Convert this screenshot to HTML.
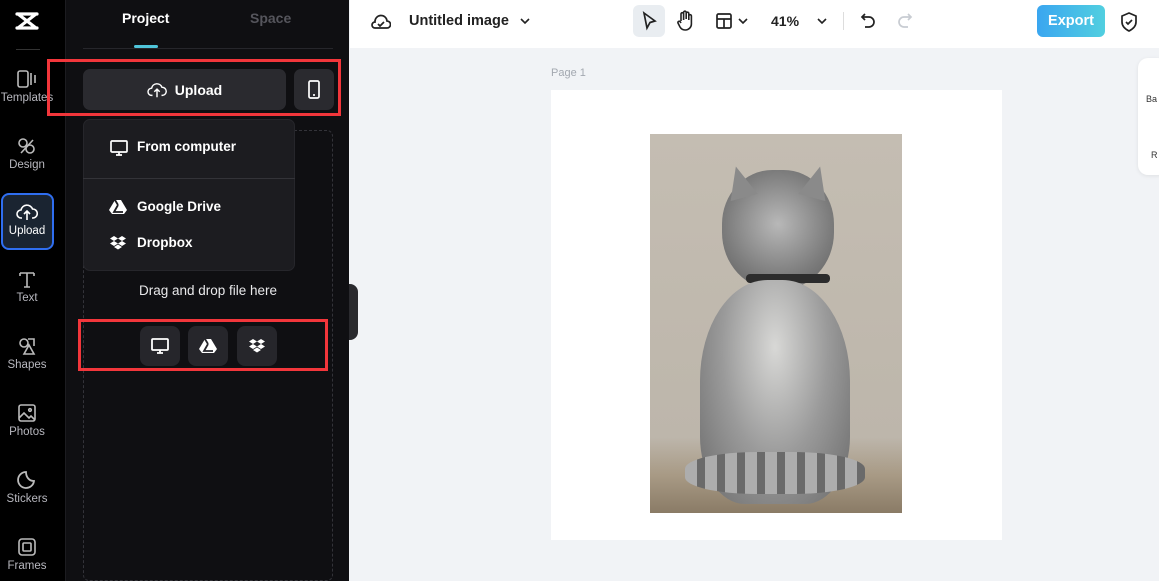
<!DOCTYPE html>
<html><head><meta charset="utf-8"><style>
*{margin:0;padding:0;box-sizing:border-box}
body{width:1159px;height:581px;overflow:hidden;font-family:"Liberation Sans",sans-serif;background:#f1f3f6;position:relative}
.side{position:absolute;left:0;top:0;width:65px;height:581px;background:#000}
.panel{position:absolute;left:65px;top:0;width:284px;height:581px;background:#0f0f12;border-left:1px solid #1c1c20}
.nav{position:absolute;left:0;width:54px;text-align:center;color:#b8b8bf;font-size:11.5px}
.nav svg{display:block;margin:0 auto 3px}
.abs{position:absolute}
.top{position:absolute;left:350px;top:0;width:809px;height:48px;background:#fff}
</style></head><body>
<div class="side">
  <svg class="abs" style="left:14px;top:10px" width="26" height="22" viewBox="0 0 26 22"><path d="M3 4h20M3 18h20M4 4l18 14M22 4L4 18" stroke="#fff" stroke-width="3.2" fill="none" stroke-linecap="round"/></svg>
  <div class="abs" style="left:16px;top:49px;width:24px;height:1px;background:#333"></div>
  <div class="nav" style="top:69px"><svg width="22" height="20" viewBox="0 0 22 20" fill="none" stroke="#bbb" stroke-width="1.6"><rect x="2" y="2" width="10" height="16" rx="2"/><path d="M15 4v12M19 6v8"/></svg>Templates</div>
  <div class="nav" style="top:136px"><svg width="22" height="20" viewBox="0 0 22 20" fill="none" stroke="#bbb" stroke-width="1.6"><circle cx="7" cy="7" r="4"/><circle cx="14" cy="13" r="4"/><path d="M5 17L17 4"/></svg>Design</div>
  <div class="abs" style="left:1px;top:193px;width:53px;height:57px;border:2px solid #2f6ef0;border-radius:8px;background:#1a2431"></div>
  <div class="nav" style="top:202px;color:#fff"><svg width="22" height="20" viewBox="0 0 22 20" fill="none" stroke="#fff" stroke-width="1.6"><path d="M6 16H5a4 4 0 010-8 6 6 0 0111.5-1A4.5 4.5 0 0117 16h-1"/><path d="M11 18v-8M8 12l3-3 3 3"/></svg>Upload</div>
  <div class="nav" style="top:269px"><svg width="22" height="20" viewBox="0 0 22 20" fill="none" stroke="#bbb" stroke-width="1.6"><path d="M4 4h14M11 4v14M4 4v3M18 4v3M8 18h6"/></svg>Text</div>
  <div class="nav" style="top:336px"><svg width="22" height="20" viewBox="0 0 22 20" fill="none" stroke="#bbb" stroke-width="1.6"><circle cx="8" cy="7" r="4"/><path d="M12 3h6v7M13 9l5 9H8z"/></svg>Shapes</div>
  <div class="nav" style="top:403px"><svg width="22" height="20" viewBox="0 0 22 20" fill="none" stroke="#bbb" stroke-width="1.6"><rect x="3" y="2" width="16" height="16" rx="2"/><path d="M3 15l5-5 5 5 2-2 4 4"/><circle cx="14" cy="7" r="1.3"/></svg>Photos</div>
  <div class="nav" style="top:470px"><svg width="22" height="20" viewBox="0 0 22 20" fill="none" stroke="#bbb" stroke-width="1.8"><path d="M18 11A8 8 0 1110 2c0 5 3 9 8 9z"/></svg>Stickers</div>
  <div class="nav" style="top:537px"><svg width="22" height="20" viewBox="0 0 22 20" fill="none" stroke="#bbb" stroke-width="1.6"><rect x="3" y="2" width="16" height="16" rx="3"/><rect x="7" y="6" width="8" height="8" rx="1"/></svg>Frames</div>
</div>
<div class="panel">
  <div class="abs" style="left:56px;top:10px;color:#fff;font-weight:bold;font-size:14px">Project</div>
  <div class="abs" style="left:184px;top:10px;color:#55555c;font-weight:bold;font-size:14px">Space</div>
  <div class="abs" style="left:68px;top:45px;width:24px;height:3px;background:#4fc4d9;border-radius:2px"></div>
  <div class="abs" style="left:17px;top:48px;width:250px;height:1px;background:#26262b"></div>
  <div class="abs" style="left:17px;top:69px;width:203px;height:41px;background:#2a2a2f;border-radius:7px;color:#fff;font-size:14px;font-weight:bold;display:flex;align-items:center;justify-content:center;gap:8px"><svg width="20" height="18" viewBox="0 0 22 20" fill="none" stroke="#fff" stroke-width="1.6"><path d="M6 16H5a4 4 0 010-8 6 6 0 0111.5-1A4.5 4.5 0 0117 16h-1"/><path d="M11 18v-8M8 12l3-3 3 3"/></svg>Upload</div>
  <div class="abs" style="left:228px;top:69px;width:40px;height:41px;background:#2a2a2f;border-radius:7px"><svg class="abs" style="left:12px;top:11px" width="16" height="19" viewBox="0 0 16 19" fill="none" stroke="#fff" stroke-width="1.7"><rect x="3" y="1" width="10" height="17" rx="1.5"/><path d="M7 15h2"/></svg></div>
  <div class="abs" style="left:-19px;top:59px;width:294px;height:57px;border:3px solid #f2363b"></div>
  <div class="abs" style="left:17px;top:130px;width:250px;height:451px;border:1px dashed #333339;border-radius:6px"></div>
  <div class="abs" style="left:17px;top:119px;width:212px;height:152px;background:#1c1c20;border-radius:7px;border:1px solid #26262b"></div>
  <div class="abs" style="left:17px;top:178px;width:212px;height:1px;background:#333338"></div>
  <svg class="abs" style="left:43px;top:139px" width="20" height="18" viewBox="0 0 20 18" fill="none" stroke="#fff" stroke-width="1.7"><rect x="2" y="2" width="16" height="11" rx="1"/><path d="M7 16h6M10 13v3"/></svg>
  <div class="abs" style="left:71px;top:139px;color:#fff;font-size:13.5px;font-weight:bold">From computer</div>
  <svg class="abs" style="left:43px;top:199px" width="18" height="16" viewBox="0 0 18 16"><path d="M6 1h6l6 10-3 4H3L0 11z" fill="#fff"/><path d="M6 1l3 5M9 6L5 13h9" stroke="#1c1c20" stroke-width="1.8" fill="none"/></svg>
  <div class="abs" style="left:71px;top:199px;color:#fff;font-size:13.5px;font-weight:bold">Google Drive</div>
  <svg class="abs" style="left:43px;top:235px" width="18" height="16" viewBox="0 0 18 16" fill="#fff"><path d="M5 1l4 2.5L5 6 1 3.5zM13 1l4 2.5L13 6 9 3.5zM5 6l4 2.5L5 11 1 8.5zM13 6l4 2.5-4 2.5-4-2.5zM5 12l4-2.5 4 2.5-4 2.5z"/></svg>
  <div class="abs" style="left:71px;top:235px;color:#fff;font-size:13.5px;font-weight:bold">Dropbox</div>
  <div class="abs" style="left:17px;top:283px;width:250px;text-align:center;color:#e8e8ea;font-size:13.5px">Drag and drop file here</div>
  <div class="abs" style="left:74px;top:326px;width:40px;height:40px;background:#26262b;border-radius:8px"><svg class="abs" style="left:10px;top:11px" width="20" height="18" viewBox="0 0 20 18" fill="none" stroke="#fff" stroke-width="1.8"><rect x="2" y="2" width="16" height="11" rx="1"/><path d="M7 16h6M10 13v3"/></svg></div>
  <div class="abs" style="left:122px;top:326px;width:40px;height:40px;background:#26262b;border-radius:8px"><svg class="abs" style="left:11px;top:12px" width="18" height="16" viewBox="0 0 18 16"><path d="M6 1h6l6 10-3 4H3L0 11z" fill="#fff"/><path d="M6 1l3 5M9 6L5 13h9" stroke="#26262b" stroke-width="1.8" fill="none"/></svg></div>
  <div class="abs" style="left:171px;top:326px;width:40px;height:40px;background:#26262b;border-radius:8px"><svg class="abs" style="left:11px;top:12px" width="18" height="16" viewBox="0 0 18 16" fill="#fff"><path d="M5 1l4 2.5L5 6 1 3.5zM13 1l4 2.5L13 6 9 3.5zM5 6l4 2.5L5 11 1 8.5zM13 6l4 2.5-4 2.5-4-2.5zM5 12l4-2.5 4 2.5-4 2.5z"/></svg></div>
  <div class="abs" style="left:12px;top:319px;width:250px;height:52px;border:3px solid #f2363b"></div>
</div>
<div class="abs" style="left:349px;top:284px;width:9px;height:56px;background:#2a2a2e;border-radius:0 8px 8px 0"></div>
<div class="top">
  <svg class="abs" style="left:21px;top:12px" width="20" height="20" viewBox="0 0 20 20" fill="none" stroke="#222" stroke-width="1.7"><path d="M5 16H4a3 3 0 010-6 6 6 0 0112-1 3.5 3.5 0 010 7H5z"/><path d="M7 12l2 2 4-4"/></svg>
  <div class="abs" style="left:59px;top:13px;font-size:14.5px;font-weight:bold;color:#222">Untitled image</div>
  <svg class="abs" style="left:169px;top:16px" width="12" height="10" viewBox="0 0 12 10" fill="none" stroke="#222" stroke-width="1.6"><path d="M2 3l4 4 4-4"/></svg>
  <div class="abs" style="left:283px;top:5px;width:32px;height:32px;background:#e9edf1;border-radius:6px"></div>
  <svg class="abs" style="left:290px;top:11px" width="18" height="20" viewBox="0 0 18 20" fill="none" stroke="#222" stroke-width="1.7"><path d="M4 2l11 8-5 1.5L7 17z"/></svg>
  <svg class="abs" style="left:326px;top:10px" width="18" height="22" viewBox="0 0 18 22" fill="none" stroke="#222" stroke-width="1.6"><path d="M5 11V4a1.3 1.3 0 012.6 0v6M7.6 9V2.5a1.3 1.3 0 012.6 0V9M10.2 9V3.5a1.3 1.3 0 012.6 0V10M12.8 10V6a1.3 1.3 0 012.6 0v8a6 6 0 01-6 6H9a6 6 0 01-5-3l-2-4a1.3 1.3 0 012.2-1.3L5 13"/></svg>
  <svg class="abs" style="left:365px;top:12px" width="18" height="18" viewBox="0 0 18 18" fill="none" stroke="#222" stroke-width="1.7"><rect x="2" y="2" width="14" height="14" rx="1.5"/><path d="M2 7h14M9 7v9"/></svg>
  <svg class="abs" style="left:387px;top:16px" width="12" height="10" viewBox="0 0 12 10" fill="none" stroke="#222" stroke-width="1.6"><path d="M2 3l4 4 4-4"/></svg>
  <div class="abs" style="left:421px;top:13px;font-size:14px;font-weight:bold;color:#222">41%</div>
  <svg class="abs" style="left:466px;top:16px" width="12" height="10" viewBox="0 0 12 10" fill="none" stroke="#222" stroke-width="1.6"><path d="M2 3l4 4 4-4"/></svg>
  <div class="abs" style="left:493px;top:12px;width:1px;height:18px;background:#ddd"></div>
  <svg class="abs" style="left:509px;top:11px" width="18" height="20" viewBox="0 0 18 20" fill="none" stroke="#222" stroke-width="1.7"><path d="M6 3L3 6l3 3M3 6h7a5 5 0 010 10H6"/></svg>
  <svg class="abs" style="left:546px;top:11px" width="18" height="20" viewBox="0 0 18 20" fill="none" stroke="#c8ccd2" stroke-width="1.7"><path d="M12 3l3 3-3 3M15 6H8a5 5 0 000 10h4"/></svg>
  <div class="abs" style="left:687px;top:5px;width:68px;height:32px;border-radius:6px;background:linear-gradient(90deg,#3aa6f0,#51cfe0);color:#fff;font-weight:bold;font-size:14.5px;text-align:center;line-height:32px">Export</div>
  <svg class="abs" style="left:769px;top:11px" width="20" height="22" viewBox="0 0 20 22" fill="none" stroke="#222" stroke-width="1.7"><path d="M10 2l7 3v6c0 4-3 7-7 9-4-2-7-5-7-9V5z"/><path d="M7 11l2 2 4-4"/></svg>
</div>
<div class="abs" style="left:551px;top:67px;font-size:11px;color:#a3a8b0">Page 1</div>
<div class="abs" style="left:551px;top:90px;width:451px;height:450px;background:#fff"></div>
<div class="abs" style="left:650px;top:134px;width:252px;height:379px;background:linear-gradient(180deg,#c4bdb2 0%,#bdb6ab 80%,#a89a85 90%,#8a7b66 100%);overflow:hidden">
  <div class="abs" style="left:72px;top:36px;width:112px;height:120px;border-radius:45% 45% 48% 48%;background:radial-gradient(circle at 50% 45%,#b8b8b8,#7d7d7d 60%,#5a5a5a)"></div>
  <div class="abs" style="left:76px;top:32px;width:0;height:0;border-left:14px solid transparent;border-right:14px solid transparent;border-bottom:32px solid #8a8a8a;transform:rotate(-15deg)"></div>
  <div class="abs" style="left:152px;top:32px;width:0;height:0;border-left:14px solid transparent;border-right:14px solid transparent;border-bottom:32px solid #8a8a8a;transform:rotate(15deg)"></div>
  <div class="abs" style="left:96px;top:140px;width:84px;height:9px;border-radius:4px;background:#2c2c2c"></div>
  <div class="abs" style="left:50px;top:146px;width:150px;height:224px;border-radius:45% 45% 30% 30%;background:radial-gradient(ellipse at 50% 30%,#d8d8d6,#9a9a9a 50%,#6a6a6a)"></div>
  <div class="abs" style="left:35px;top:318px;width:180px;height:42px;border-radius:40%;background:repeating-linear-gradient(90deg,#adadad 0 12px,#6a6a6a 12px 20px)"></div>
</div>
<div class="abs" style="left:1138px;top:58px;width:30px;height:117px;background:#fff;border-radius:10px;box-shadow:0 1px 4px rgba(0,0,0,.08)"><span class="abs" style="left:8px;top:36px;font-size:9px;color:#333">Ba</span><span class="abs" style="left:13px;top:92px;font-size:9px;color:#333">R</span></div>
</body></html>
